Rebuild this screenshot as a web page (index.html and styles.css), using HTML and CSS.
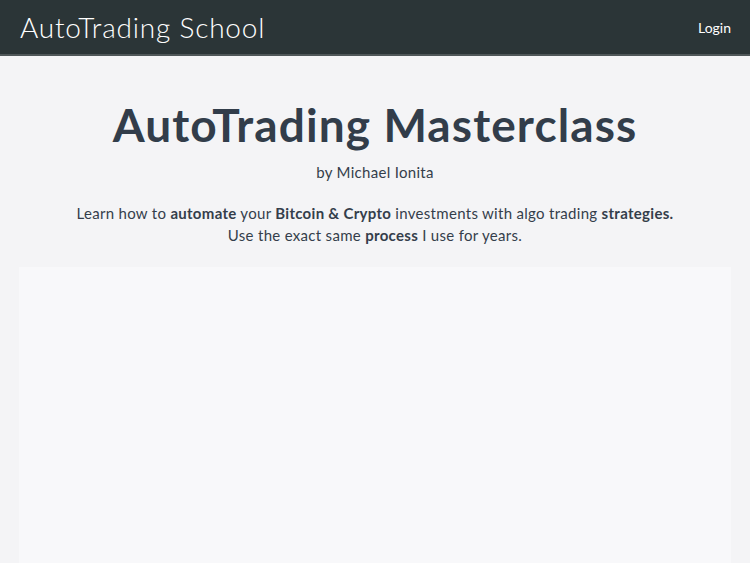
FILE: index.html
```html
<!DOCTYPE html>
<html lang="en">
<head>
<meta charset="UTF-8">
<meta name="viewport" content="width=device-width, initial-scale=1.0">
<title>AutoTrading School</title>
<link rel="stylesheet" href="styles.css">
</head>
<body>
  <header class="topbar">
    <a class="brand" href="#">AutoTrading School</a>
    <a class="login" href="#">Login</a>
  </header>

  <main class="hero">
    <h1 class="hero-title">AutoTrading Masterclass</h1>
    <p class="hero-author">by Michael Ionita</p>
    <p class="hero-text">
      Learn how to <b>automate</b> your <b>Bitcoin &amp; Crypto</b> investments with algo trading <b>strategies.</b><br>
      Use the exact same <b>process</b> I use for years.
    </p>
    <div class="video-box"></div>
  </main>
</body>
</html>
```

FILE: styles.css
```css
body {
  margin: 0;
  padding: 0;
  font-family: Lato, "Open Sans", Arial, sans-serif;
  background-color: #f4f4f6;
  color: #343e4b;
  overflow: hidden;
}
a {
  text-decoration: none;
}
.topbar {
  height: 54px;
  background-color: #2b3537;
  border-bottom: 2px solid #4f5759;
  display: flex;
  align-items: center;
  justify-content: space-between;
  padding: 0 19px 0 20px;
}
.brand {
  color: #fff;
  font-size: 28px;
  font-weight: 300;
  letter-spacing: 0.8px;
}
.login {
  color: #fff;
  font-size: 14px;
  margin-top: 1px;
}
.hero {
  display: flex;
  flex-direction: column;
  align-items: center;
  text-align: center;
  padding: 0 19px 0 19px;
}
.hero-title {
  margin: 41px 0 0;
  font-size: 46px;
  font-weight: 700;
  line-height: 56px;
  letter-spacing: 1.1px;
  color: #323d4a;
}
.hero-author {
  margin: 8px 0 0;
  font-size: 15px;
  line-height: 22px;
  letter-spacing: 0.3px;
}
.hero-text {
  margin: 19px 0 0;
  font-size: 15px;
  line-height: 22px;
  letter-spacing: 0.3px;
}
.hero-text b {
  font-weight: 700;
}
.video-box {
  align-self: stretch;
  margin-top: 21px;
  height: 296px;
  background-color: #f8f8fa;
}
```
